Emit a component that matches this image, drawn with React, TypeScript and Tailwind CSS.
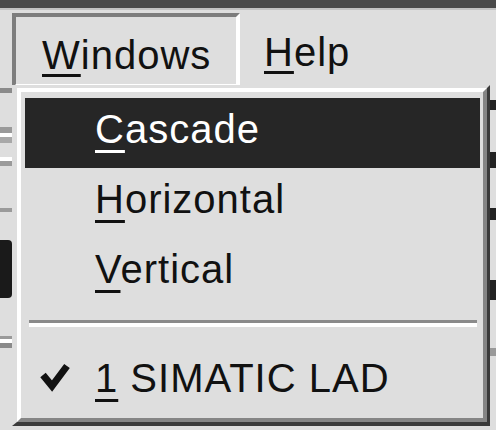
import React from "react";

function Check() {
  return (
    <svg width="32" height="32" viewBox="0 0 32 32" className="block">
      <path d="M4 14 L13 25 L28 5" fill="none" stroke="#111" strokeWidth="7" strokeLinejoin="miter" />
    </svg>
  );
}

function Item({
  hot,
  label,
  mark,
  checked,
}: {
  hot?: boolean;
  label: string;
  mark: number;
  checked?: boolean;
}) {
  return (
    <div
      className={
        hot
          ? "relative h-[70px] pl-[70px] pt-[11px] bg-[#262626] text-white"
          : "relative h-[70px] pl-[70px] pt-[11px] text-[#111]"
      }
    >
      {checked && (
        <div className="absolute left-[14px] top-[14px]">
          <Check />
        </div>
      )}
      <span className="underline decoration-[3px] underline-offset-[7px]">{label.slice(0, mark)}</span>
      {label.slice(mark)}
    </div>
  );
}

export default function App() {
  return (
    <div className="relative h-[430px] w-[496px] overflow-hidden bg-[#dedede] font-['Liberation_Sans',Arial,sans-serif] text-[40px] leading-[40px] tracking-[1px] text-[#111]">
      <div className="h-[8px] bg-[#4a4a4a]" />
      <div className="h-[2px] bg-[#c2c2c2]" />

      {/* menu bar */}
      <div className="flex items-start pl-[12px] pt-[3px]">
        <div className="h-[75px] w-[228px] border-t-4 border-l-4 border-r-4 border-b-4 border-t-[#7d7d7d] border-l-[#7d7d7d] border-r-white border-b-white pl-[26px] pt-[18px]">
          <span className="underline decoration-[3px] underline-offset-[5px]">W</span>indows
        </div>
        <div className="ml-[24px] pt-[19px]">
          <span className="underline decoration-[3px] underline-offset-[5px]">H</span>elp
        </div>
      </div>

      {/* toolbar edges peeking out behind the menu */}
      <div className="flex justify-between">
        <div className="flex w-[12px] flex-col">
          <div className="h-[5px] bg-[#8a8a8a]" />
          <div className="mt-[34px] h-[6px] bg-[#9a9a9a]" />
          <div className="h-[4px] bg-white" />
          <div className="h-[6px] bg-[#a8a8a8]" />
          <div className="mt-[14px] h-[4px] bg-white" />
          <div className="h-[5px] bg-[#9a9a9a]" />
          <div className="mt-[42px] h-[4px] bg-[#9a9a9a]" />
          <div className="mt-[28px] h-[58px] rounded-r-[4px] bg-[#1a1a1a]" />
          <div className="mt-[38px] h-[3px] bg-[#9a9a9a]" />
          <div className="h-[4px] bg-white" />
          <div className="h-[5px] bg-[#8a8a8a]" />
        </div>
        <div className="flex w-[6px] flex-col">
          <div className="mt-[12px] h-[10px] bg-[#222]" />
          <div className="mt-[42px] h-[16px] bg-[#222]" />
          <div className="mt-[40px] h-[12px] bg-[#222]" />
          <div className="mt-[60px] h-[20px] bg-[#222]" />
          <div className="mt-[48px] h-[8px] bg-[#999]" />
        </div>
      </div>

      {/* dropdown */}
      <div className="absolute left-[12px] top-[85px] w-[478px] border-t-[3px] border-l-[5px] border-r-[3px] border-b-[4px] border-t-[#dedede] border-l-[#dedede] border-r-[#3a3a3a] border-b-[#3a3a3a]">
        <div className="border-t-4 border-l-4 border-r-4 border-b-4 border-t-white border-l-white border-r-[#858585] border-b-[#858585] bg-[#dedede] pb-[1px] pl-[4px] pr-[3px] pt-[6px]">
          <Item hot label="Cascade" mark={1} />
          <Item label="Horizontal" mark={1} />
          <Item label="Vertical" mark={1} />
          <div className="ml-[4px] mr-[3px] pb-[20px] pt-[12px]">
            <div className="h-[3px] bg-[#8a8a8a]" />
            <div className="h-[4px] bg-white" />
          </div>
          <Item label="1 SIMATIC LAD" mark={1} checked />
        </div>
      </div>
    </div>
  );
}
